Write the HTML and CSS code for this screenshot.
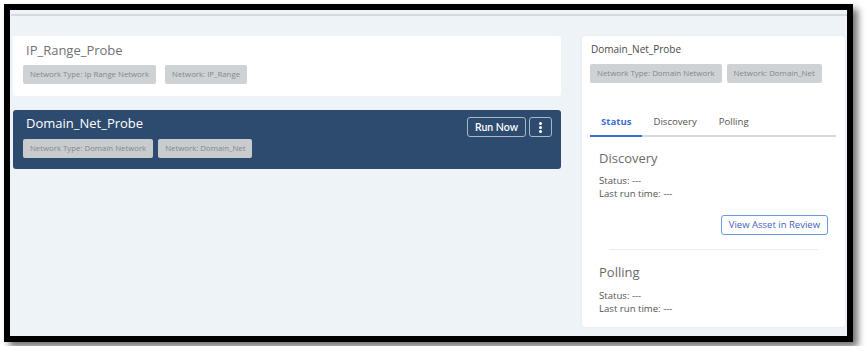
FILE: index.html
```html
<!DOCTYPE html>
<html lang="en">
<head>
    <meta charset="UTF-8">
    <meta name="viewport" content="width=device-width, initial-scale=1.0">
    <title>Probes</title>
    <link rel="stylesheet" href="styles.css">
</head>
<body>
    <div class="frame">
        <div class="topbar"></div>
        <div class="main">
            <div class="probe-list">
                <div class="probe-card">
                    <div class="probe-info">
                        <div class="probe-title">IP_Range_Probe</div>
                        <div class="chips chips-wide">
                            <span class="chip">Network Type: Ip Range Network</span>
                            <span class="chip">Network: IP_Range</span>
                        </div>
                    </div>
                </div>
                <div class="probe-card selected">
                    <div class="probe-info">
                        <div class="probe-title">Domain_Net_Probe</div>
                        <div class="chips">
                            <span class="chip">Network Type: Domain Network</span>
                            <span class="chip">Network: Domain_Net</span>
                        </div>
                    </div>
                    <div class="probe-actions">
                        <button class="btn-outline">Run Now</button>
                        <button class="btn-outline btn-kebab">
                            <span class="dot"></span><span class="dot"></span><span class="dot"></span>
                        </button>
                    </div>
                </div>
            </div>
            <div class="details">
                <div class="details-title">Domain_Net_Probe</div>
                <div class="chips">
                    <span class="chip">Network Type: Domain Network</span>
                    <span class="chip">Network: Domain_Net</span>
                </div>
                <div class="tabs">
                    <div class="tab active">Status</div>
                    <div class="tab">Discovery</div>
                    <div class="tab">Polling</div>
                </div>
                <div class="section">
                    <div class="section-title">Discovery</div>
                    <div class="line">Status: ---</div>
                    <div class="line">Last run time: ---</div>
                    <div class="section-actions">
                        <button class="btn-link">View Asset in Review</button>
                    </div>
                    <div class="divider"></div>
                    <div class="section-title polling">Polling</div>
                    <div class="line">Status: ---</div>
                    <div class="line">Last run time: ---</div>
                </div>
            </div>
        </div>
    </div>
</body>
</html>
```

FILE: styles.css
```css
body {
    margin: 0;
    padding: 4px;
    background-color: #fff;
    font-family: "Open Sans", Arial, sans-serif;
}

.frame {
    width: 837px;
    height: 326px;
    border: 6px solid #000;
    background-color: #eef3f7;
    box-shadow: 5px 5px 7px rgba(0, 0, 0, 0.55);
    overflow: hidden;
}

.topbar {
    height: 4px;
    margin-left: 1px;
    border-bottom: 2px solid #d3d9df;
}

.main {
    display: flex;
    gap: 21px;
    padding: 20px 1px 0 3px;
}

.probe-list {
    width: 548px;
    display: flex;
    flex-direction: column;
    gap: 14px;
}

.probe-card {
    display: flex;
    justify-content: space-between;
    background-color: #fff;
    border-radius: 3px;
    padding: 6px 9px 12px 10px;
}

.probe-title {
    font-size: 13px;
    line-height: 16px;
    color: #707274;
    margin: 0 0 7px 3px;
}

.probe-card.selected {
    background-color: #2d4a6f;
    padding: 5px 9px 11px 10px;
}

.probe-card.selected .probe-title {
    color: #fff;
    margin-bottom: 8px;
}

.chips {
    display: flex;
    gap: 5px;
}

.chips-wide {
    gap: 9px;
}

.chip {
    height: 19px;
    line-height: 19px;
    padding: 0 7px;
    font-size: 7.8px;
    color: #83878b;
    background-color: #cfd2d4;
    border-radius: 2px;
    white-space: nowrap;
}

.selected .chip {
    background-color: #c9ccce;
}

.probe-actions {
    display: flex;
    gap: 3px;
    margin-top: 2px;
    align-self: flex-start;
}

.btn-outline {
    height: 20px;
    padding: 0 7px;
    background: transparent;
    border: 1px solid #a9b7c8;
    border-radius: 3px;
    color: #fff;
    font-family: Lato, Arial, sans-serif;
    font-size: 10.5px;
    font-weight: 600;
}

.btn-kebab {
    width: 23px;
    padding: 0;
    display: flex;
    flex-direction: column;
    align-items: center;
    justify-content: center;
    gap: 1px;
}

.dot {
    width: 3px;
    height: 3px;
    border-radius: 50%;
    background-color: #fff;
}

.details {
    width: 246px;
    height: 277px;
    background-color: #fff;
    border-radius: 3px;
    box-shadow: 0 0 2px rgba(0, 0, 0, 0.08);
    padding: 6px 9px 8px 8px;
}

.details-title {
    font-size: 10px;
    line-height: 14px;
    color: #4a4a4a;
    margin: 0 0 8px 1px;
}

.details .chip {
    font-size: 7.9px;
}

.tabs {
    display: flex;
    margin-top: 25px;
    border-bottom: 2px solid #d5d9dc;
}

.tab {
    padding: 7px 11px 6px;
    font-size: 9.6px;
    line-height: 14px;
    color: #555;
}

.tab.active {
    color: #3c6fd0;
    font-weight: 700;
    border-bottom: 2px solid #3c6fd0;
    margin-bottom: -2px;
}

.section {
    padding: 13px 8px 0 9px;
}

.section-title {
    font-size: 13px;
    line-height: 16px;
    color: #6a6a6a;
    margin-bottom: 8px;
}

.section-title.polling {
    margin-bottom: 9px;
}

.line {
    font-size: 9.6px;
    line-height: 13.4px;
    color: #555;
}

.section-actions {
    display: flex;
    justify-content: flex-end;
    margin-top: 14px;
}

.btn-link {
    height: 20px;
    padding: 0 7px;
    background: #fff;
    border: 1px solid #6f97e2;
    border-radius: 3px;
    color: #3f64b8;
    font-family: "Open Sans", Arial, sans-serif;
    font-size: 9.5px;
}

.divider {
    height: 1px;
    margin: 14px 10px 14px;
    background-color: #ececec;
}
```
